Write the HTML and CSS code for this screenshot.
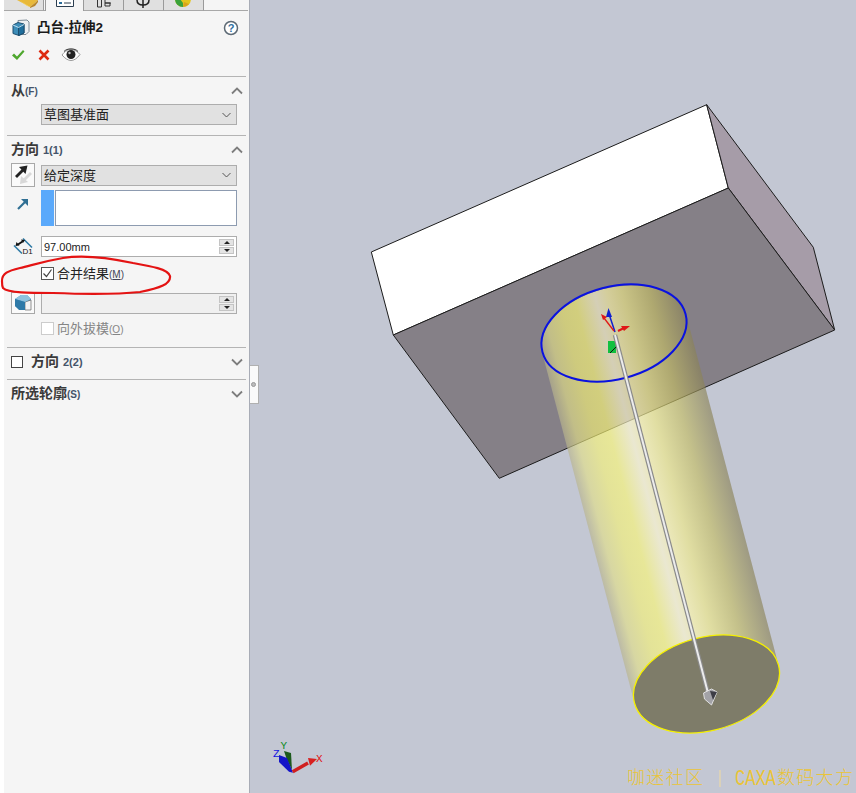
FILE: index.html
```html
<!DOCTYPE html>
<html lang="zh">
<head>
<meta charset="utf-8">
<title>凸台-拉伸2</title>
<link rel="stylesheet" href="styles.css">
</head>
<body>
<div class="app">
  <aside class="panel">
    <div class="tabs">
      <div class="tab tab-first"><svg width="40" height="10" viewBox="0 0 40 10"><path d="M13 0h21l-3 3-5 4z" fill="#e8b93a"/><path d="M26 7l5-4 3-3v2l-3 4-5 2z" fill="#b8862a"/><path d="M15 0l11 7-3-1z" fill="#f6d35f"/></svg></div>
      <div class="tab tab-active"><svg width="38" height="10" viewBox="0 0 38 10"><path d="M10.500 0v6.500h17V0" fill="#fff" stroke="#2c3e50"/><path d="M13 2h3v2h-3z" fill="#2c6c9a"/><path d="M18 3h7" stroke="#2c3e50"/></svg></div>
      <div class="tab"><svg width="39" height="10" viewBox="0 0 39 10"><path d="M13.500 0v7h4V0M21 0v3h6M21 3h5v3h-5z" fill="none" stroke="#333"/></svg></div>
      <div class="tab"><svg width="39" height="10" viewBox="0 0 39 10"><path d="M13 0c0 4 3 5 6 5s6-1 6-5" fill="none" stroke="#222" stroke-width="1.500"/><path d="M19 0v8" stroke="#222" stroke-width="1.500"/></svg></div>
      <div class="tab"><svg width="39" height="10" viewBox="0 0 39 10"><circle cx="19" cy="-1" r="8" fill="#e3c51c"/><path d="M19 7a8 8 0 0 1-8-8h5l3 4z" fill="#3aa23a"/><path d="M19 7a8 8 0 0 0 6-3l-5-2z" fill="#d9a31a"/></svg></div>
    </div>

    <div class="title-row">
      <svg class="title-icon" width="18" height="18" viewBox="0 0 18 18"><path d="M6 1.500l9-.500 2 2v9.500l-3 3H7z" fill="#eef0f2" stroke="#7c8a96"/><path d="M1 6l5-2.500 6 1.500v9l-5 2.500-6-2z" fill="#3d8db8" stroke="#1d4f70"/><path d="M6.500 8.500V16.500L12 14V5.500z" fill="#1f6e9c" stroke="#1d4f70"/><path d="M1 6l5.500 2.500L12 5.500" fill="none" stroke="#bfe0f2"/></svg>
      <span class="title">凸台-拉伸2</span>
      <svg class="help" width="16" height="16" viewBox="0 0 16 16"><circle cx="8" cy="8" r="6.500" fill="#fff" stroke="#5d6a75" stroke-width="1.500"/><text class="help-q" x="8" y="12" text-anchor="middle">?</text></svg>
    </div>

    <div class="actions">
      <svg width="14" height="12" viewBox="0 0 14 12"><path d="M1 6.500l2-2 3 3 6-6.500 1.500 1.500L6 11z" fill="#4ea72e"/></svg>
      <svg width="12" height="12" viewBox="0 0 12 12"><path d="M1.500 1.500l9 9M10.500 1.500l-9 9" stroke="#dd2a10" stroke-width="2.600"/></svg>
      <svg width="20" height="14" viewBox="0 0 20 14"><path d="M1 7c3-4 6-5.500 9-5.500S16 3 19 6.500c-3 4-6 6-9 6S4 10.500 1 7z" fill="#fff" stroke="#9a9a9a"/><circle cx="10" cy="6.500" r="4.500" fill="#222"/><circle cx="8.500" cy="5" r="1.200" fill="#bbb"/><path d="M3 3.500C6 0 14 0 17 3.500" fill="none" stroke="#333"/></svg>
    </div>

    <section class="group">
      <div class="head"><span class="head-text"><b class="cjk">从</b><small>(F)</small></span><svg class="chev" width="12" height="8" viewBox="0 0 12 8"><path d="M1 6.500l5-5 5 5" fill="none" stroke="#7d7d7d" stroke-width="1.800"/></svg></div>
      <div class="row">
        <span class="tool tool-none"></span>
        <div class="select"><span>草图基准面</span><svg width="9" height="6" viewBox="0 0 9 6"><path d="M.5 1l4 4 4-4" fill="none" stroke="#555"/></svg></div>
      </div>
    </section>

    <section class="group group-dir1">
      <div class="head"><span class="head-text"><b class="cjk">方向</b><small class="num">1(1)</small></span><svg class="chev" width="12" height="8" viewBox="0 0 12 8"><path d="M1 6.500l5-5 5 5" fill="none" stroke="#7d7d7d" stroke-width="1.800"/></svg></div>

      <div class="row row-tool">
        <span class="tool"><svg width="20" height="20" viewBox="0 0 20 20"><path d="M18 8l-7 7" stroke="#d8d8d8" stroke-width="2.800"/><path d="M7 19l1-8 7 6z" fill="#d8d8d8"/><path d="M3 12l7-7" stroke="#222" stroke-width="2.800"/><path d="M14.500.500L6 2l6.500 7z" fill="#222"/></svg></span>
        <div class="select"><span>给定深度</span><svg width="9" height="6" viewBox="0 0 9 6"><path d="M.5 1l4 4 4-4" fill="none" stroke="#555"/></svg></div>
      </div>

      <div class="row row-list">
        <span class="tool-plain"><svg width="12" height="12" viewBox="0 0 12 12"><path d="M1 11l7-7" stroke="#2f6f93" stroke-width="2.200"/><path d="M11 1H4l7 7z" fill="#2f6f93"/></svg></span>
        <div class="list"><span class="swatch"></span><span class="list-box"></span></div>
      </div>

      <div class="row row-num">
        <span class="tool-plain"><svg width="20" height="20" viewBox="0 0 20 20"><path d="M10 1.500l9 9M1 8.500l8 8" fill="none" stroke="#2f7ba6" stroke-width="1.600"/><path d="M5 7.500l4.500-3" stroke="#111" stroke-width="1.800"/><path d="M2.500 9l1-4 3 3.500zM12 3l-4-.500 2 3.500z" fill="#111"/><text class="d1" x="9.500" y="17">D1</text></svg></span>
        <div class="spin-field"><span class="spin-value">97.00mm</span><span class="spin"><i class="up"></i><i class="down"></i></span></div>
      </div>

      <label class="check-row"><span class="box box-on"><svg width="11" height="11" viewBox="0 0 11 11"><path d="M1.500 5.500l3 3 5-7" fill="none" stroke="#444" stroke-width="1.200"/></svg></span><span>合并结果<small class="key">(<u>M</u>)</small></span></label>

      <div class="row row-draft">
        <span class="tool"><svg width="20" height="20" viewBox="0 0 20 20"><path d="M2 6l6-4h6l4 4v10H6l-4-3z" fill="#4a93bd"/><path d="M12 9l6-2v10h-6z" fill="#f4f4f4" stroke="#666" stroke-width=".700"/><path d="M2 6l6-4h6l4 4-6 3z" fill="#8ec2df"/><path d="M2 6l10 3v8L6 17l-4-4z" fill="#2f7aa8"/></svg></span>
        <div class="spin-field spin-off"><span class="spin-value"></span><span class="spin"><i class="up"></i><i class="down"></i></span></div>
      </div>

      <label class="check-row check-off"><span class="box"></span><span>向外拔模<small class="key">(<u>O</u>)</small></span></label>
    </section>

    <section class="group group-closed">
      <div class="head"><span class="head-text"><span class="box box-dark"></span><b class="cjk">方向</b><small class="num">2(2)</small></span><svg class="chev" width="12" height="8" viewBox="0 0 12 8"><path d="M1 1.500l5 5 5-5" fill="none" stroke="#7d7d7d" stroke-width="1.800"/></svg></div>
    </section>

    <section class="group">
      <div class="head"><span class="head-text"><b class="cjk">所选轮廓</b><small>(S)</small></span><svg class="chev" width="12" height="8" viewBox="0 0 12 8"><path d="M1 1.500l5 5 5-5" fill="none" stroke="#7d7d7d" stroke-width="1.800"/></svg></div>
    </section>
  </aside>

  <main class="viewport">
    <div class="handle"><span class="handle-dot"></span></div>
    <svg class="scene" width="606" height="793" viewBox="250 0 606 793">
      <defs>
        <linearGradient id="cyl" gradientUnits="userSpaceOnUse" x1="542" y1="352" x2="686" y2="314">
          <stop offset="0" stop-color="#b8b48e"/>
          <stop offset=".08" stop-color="#e2df88"/>
          <stop offset=".2" stop-color="#f5f278"/>
          <stop offset=".3" stop-color="#fbf878"/>
          <stop offset=".44" stop-color="#fff9d0"/>
          <stop offset=".52" stop-color="#fff8a8"/>
          <stop offset=".62" stop-color="#f0ea88"/>
          <stop offset=".8" stop-color="#c5be64"/>
          <stop offset="1" stop-color="#8a8258"/>
        </linearGradient>
      </defs>
      <path class="edge" d="M371.300 252L706.700 104.700 728.300 188 393.300 335z" fill="#fff"/>
      <path class="edge" d="M706.700 104.700L813.300 247.300 834.700 330 728.300 188z" fill="#a69ca8"/>
      <path class="edge" d="M393.300 335L728.300 188 834.700 330 499.300 478.300z" fill="#858087"/>
      <path d="M542 352A74.500 46.700 -14.800 0 1 686 314L778.500 665A74.500 46.700 -14.800 0 1 634.500 703z" fill="url(#cyl)" fill-opacity=".65"/>
      <ellipse cx="706.500" cy="684" rx="74.500" ry="46.700" transform="rotate(-14.800 706.500 684)" fill="#7e7c69" stroke="#f5f000" stroke-width="1.300"/>
      <ellipse cx="614" cy="333" rx="74" ry="46.200" transform="rotate(-14.800 614 333)" fill="none" stroke="#0a12e0" stroke-width="2"/>
      <rect x="608" y="341" width="8" height="12" fill="#12c040"/>
      <path d="M616 347l-6 6" stroke="#111"/>
      <path d="M615 335L708 693" stroke="#8a8a8a" stroke-width="4.400"/>
      <path d="M615 335L708 693" stroke="#ececec" stroke-width="2"/>
      <path d="M703.500 693l8-4 5.500 3-5.500 13-7-6z" fill="#a2a2a7" stroke="#e0e0e0"/>
      <path d="M710 691l7 1-4 8z" fill="#3d3d45"/>
      <path d="M615 332L609 314" stroke="#1020d0" stroke-width="1.500"/>
      <path d="M608.500 308l3.500 9h-6z" fill="#1020d0"/>
      <path d="M614 331l-10-13" stroke="#e01818" stroke-width="1.300"/>
      <path d="M601 314l6 3-4 3z" fill="#e01818"/>
      <path d="M618 331l6-3" stroke="#e01818" stroke-width="2"/>
      <path d="M630 326l-9 0 3 5z" fill="#e01818"/>
      <path d="M284 751l7 2 1 17-5-10z" fill="#1c5a1c"/>
      <path d="M279 755l8 3 6 14.700-4-1-10-9.700z" fill="#1414c8"/>
      <path d="M292.700 771.700L308 763" stroke="#d02020" stroke-width="3.500"/>
      <path d="M317 759l-9-1 2 7.700z" fill="#d82020"/>
      <text class="axis axis-x" x="316" y="762">X</text>
      <text class="axis axis-y" x="280.500" y="749">Y</text>
      <text class="axis axis-z" x="273" y="756.500">Z</text>
      <text class="mark" x="627" y="784">咖迷社区</text>
      <path d="M720 770v17" stroke="#f2dca0"/>
      <text class="mark mark-latin" transform="translate(735 785) scale(1 1.250)">CAXA</text>
      <text class="mark" x="777" y="784">数码大方</text>
    </svg>
  </main>

  <svg class="circle-mark" width="180" height="44" viewBox="0 0 180 44"><path d="M2 26C2 18 8 16 20 13 30 11 40 7 63 3 80 0 105 2 133 8 150 11 168 14 170 21 171 29 160 33 140 37 120 39 80 39 53 38 30 38 8 38 3 33 2 31 2 28 2 26z" fill="none" stroke="#e41313" stroke-width="2.200"/></svg>
</div>
</body>
</html>
```
FILE: styles.css
```css
* { box-sizing: border-box; }
html, body { margin: 0; padding: 0; }
body {
  width: 856px;
  height: 793px;
  overflow: hidden;
  background: #fff;
  font-family: "Liberation Sans", "Noto Sans CJK SC", sans-serif;
  color: #222;
}
.app { position: relative; display: flex; width: 856px; height: 793px; padding-left: 4px; }

.panel { flex: none; width: 246px; background: #f5f5f5; display: flex; flex-direction: column; }

.tabs { display: flex; height: 11px; flex: none; border-bottom: 1px solid #a8a8a8; width: 244px; }
.tab { width: 40px; height: 11px; background: #e0e0e0; border-right: 1px solid #9a9a9a; border-bottom: 1px solid #a8a8a8; overflow: hidden; }
.tab svg { display: block; }
.tab-first { width: 40px; margin-right: 1px; }
.tab-active { width: 39px; background: #f5f5f5; border-left: 1px solid #9a9a9a; border-bottom: 0; }

.title-row { display: flex; align-items: center; height: 18px; margin: 8px 0 0 8px; }
.title-icon { flex: none; }
.title { margin-left: 7px; font-size: 13.500px; font-weight: 700; line-height: 18px; color: #1a1a1a; }
.help { margin-left: auto; margin-right: 11px; }
.help-q { font-size: 11px; font-weight: 700; fill: #2f6f9f; }

.actions { display: flex; align-items: center; gap: 13px; height: 16px; margin: 10px 0 13px 7px; }
.actions svg:last-child { margin-left: -2px; }

.group { margin: 0 4px 0 3px; border-top: 1px solid #b4b4b4; padding: 0 0 10px 4px; }
.group-dir1 { padding-bottom: 12px; }
.head { display: flex; align-items: center; justify-content: space-between; height: 27px; padding-right: 3px; }
.head-text { display: flex; align-items: baseline; font-size: 12px; line-height: 16px; color: #333; }
.cjk { font-size: 14px; font-weight: 700; color: #3a3a3a; }
.head-text small { font-size: 10px; font-weight: 700; color: #44546a; }
.head-text .num { font-size: 11px; margin-left: 4px; }

.row { display: flex; align-items: center; }
.tool { flex: none; width: 24px; height: 24px; display: flex; align-items: center; justify-content: center; border: 1px solid #a8a8a8; background: #fafafa; }
.tool-none { border: 0; background: none; height: 21px; }
.tool-plain { flex: none; width: 24px; display: flex; align-items: center; justify-content: center; }

.select { flex: none; display: flex; align-items: center; justify-content: space-between; width: 196px; height: 21px; margin-left: 6px; padding: 0 5px 0 2px; background: #e1e1e1; border: 1px solid #adadad; font-size: 13px; line-height: 19px; color: #222; }

.row-list { margin-top: 3px; align-items: flex-start; }
.row-list .tool-plain { height: 27px; }
.list { display: flex; width: 196px; height: 36px; margin-left: 6px; }
.swatch { flex: none; width: 13px; background: #5aa9fb; }
.list-box { flex: 1; margin-left: 1px; background: #fff; border: 1px solid #8d9bb0; }

.row-num { margin-top: 10px; }
.spin-field { flex: none; display: flex; align-items: center; justify-content: space-between; width: 196px; height: 21px; margin-left: 6px; padding: 0 2px 0 2px; background: #fff; border: 1px solid #adadad; font-size: 11px; color: #222; }
.spin-off { background: #f0f0f0; }
.spin { display: flex; flex-direction: column; gap: 1px; }
.spin i { display: flex; width: 15px; height: 7px; background: #e4e4e4; border: 1px solid #c4c4c4; }
.spin i::after { content: ""; margin: auto; border-left: 3px solid transparent; border-right: 3px solid transparent; }
.spin .up::after { border-bottom: 3px solid #222; }
.spin .down::after { border-top: 3px solid #222; }
.d1 { font-size: 8px; fill: #111; }

.check-row { display: flex; align-items: center; height: 13px; margin: 10px 0 0 30px; font-size: 13px; line-height: 13px; color: #222; }
.check-row .key { font-size: 10px; color: #445; }
.box { flex: none; display: flex; align-items: center; justify-content: center; width: 13px; height: 13px; margin-right: 3px; background: #fff; border: 1px solid #888; }
.box-on { border-color: #555; }
.box-dark { align-self: center; width: 12px; height: 12px; margin-right: 8px; border-color: #444; }
.check-off { margin-top: 8px; color: #858585; }
.check-off .box { border-color: #ccc; }
.check-off .key { color: #858585; }

.row-draft { margin-top: 12px; }
.row-draft .tool { height: 22px; }

.group-closed { padding-bottom: 0; }
.group-closed .head { height: 31px; padding-bottom: 4px; }

.viewport { position: relative; flex: 1; background: #c3c7d3; border-left: 1px solid #a8acb6; margin-left: -1px; }
.scene { display: block; }
.handle { position: absolute; left: 0; top: 365px; width: 9px; height: 39px; background: #fafafa; border: 1px solid #b0b0b0; border-left: 0; display: flex; align-items: center; justify-content: flex-start; }
.handle-dot { width: 5px; height: 5px; margin-left: 1px; border-radius: 50%; background: #bbb; border: 1px solid #999; }

.edge { stroke: #1c1c1c; stroke-width: 1; stroke-linejoin: miter; }
.axis { font-family: "Liberation Mono", monospace; font-size: 11px; }
.axis-x { fill: #e01010; }
.axis-y { fill: #0c8a1c; }
.axis-z { fill: #1414e0; }
.mark { font-family: "Noto Sans CJK SC", sans-serif; font-weight: 300; font-size: 18px; letter-spacing: 1.300px; fill: #efc422; fill-opacity: .9; }
.mark-latin { font-family: "Liberation Mono", monospace; font-size: 17px; letter-spacing: 0; font-weight: 400; }

.circle-mark { position: absolute; left: 0; top: 255px; pointer-events: none; }
```
